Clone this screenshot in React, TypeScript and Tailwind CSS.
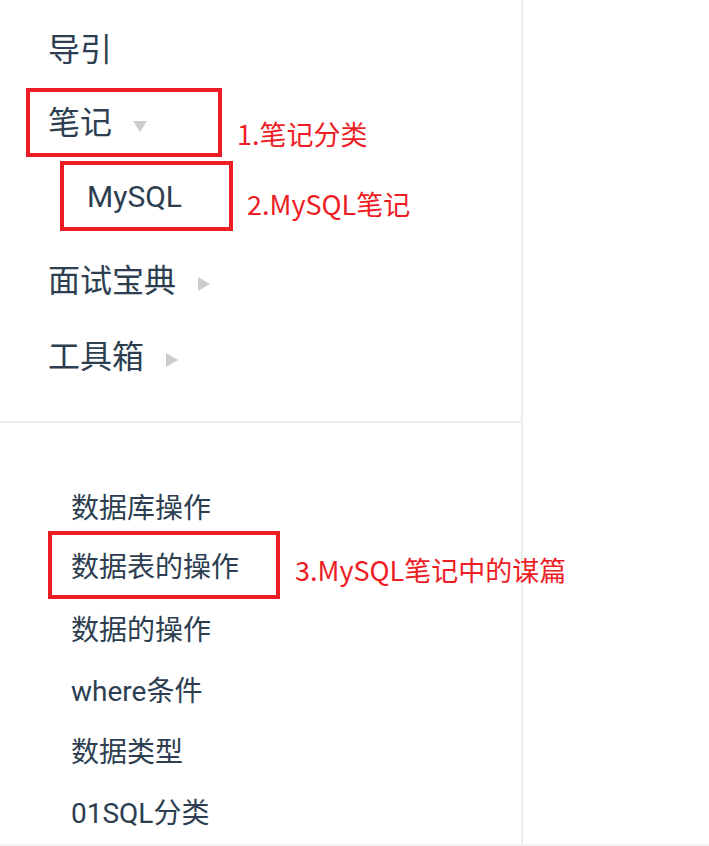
const text = "font-['Roboto','Noto_Sans_CJK_SC',sans-serif] text-[#2c3e50]";
const note =
  "whitespace-nowrap font-['Noto_Sans_CJK_SC',sans-serif] text-[27px] leading-none text-[#ee1c24]";
const box = "flex shrink-0 items-center border-[4px] border-[#ee1c24]";

function ArrowDown() {
  return (
    <span className="ml-[21px] mt-[7px] inline-block h-0 w-0 border-x-[7.5px] border-t-[11px] border-x-transparent border-t-[#ccc]" />
  );
}

function ArrowRight() {
  return (
    <span className="mt-[6px] inline-block h-0 w-0 border-y-[7.5px] border-l-[12px] border-y-transparent border-l-[#ccc]" />
  );
}

const links = ["数据库操作", "数据表的操作", "数据的操作", "where条件", "数据类型", "01SQL分类"];

export default function App() {
  return (
    <div className={`flex h-[846px] w-[709px] overflow-hidden border-b-[2px] border-[#f1f1f3] bg-white ${text}`}>
      <aside className="h-full w-[523px] shrink-0 border-r-[2px] border-[#eaecef]">
        {/* 导航 */}
        <nav className="border-b-[2px] border-[#eaecef] pt-[14px] pb-[28px]">
          <div className="flex h-[72px] items-center pl-[48px] text-[32px]">导引</div>

          <div className="flex h-[74px] items-start pl-[26px]">
            <div className={`${box} mt-[2px] h-[69px] w-[196px] pl-[18px] text-[32px]`}>
              笔记
              <ArrowDown />
            </div>
            <span className={`${note} ml-[15px] mt-[34px]`}>1.笔记分类</span>
          </div>

          <div className="flex h-[72px] items-start pl-[60px]">
            <div className={`${box} mt-[1px] h-[70px] w-[173px] pl-[23px] text-[30px]`}>MySQL</div>
            <span className={`${note} ml-[14px] mt-[30px]`}>2.MySQL笔记</span>
          </div>

          <div className="mt-[13px] flex h-[72px] items-center gap-[22px] pl-[48px] text-[32px]">
            面试宝典
            <ArrowRight />
          </div>

          <div className="mt-[4px] flex h-[72px] items-center gap-[22px] pl-[48px] text-[32px]">
            工具箱
            <ArrowRight />
          </div>
        </nav>

        {/* 侧边栏文章 */}
        <ul className="pt-[55px] text-[28px]">
          {links.map((l, i) =>
            i === 1 ? (
              <li key={l} className="flex h-[61px] items-start pl-[48px]">
                <div className={`${box} -mt-[8px] h-[68px] w-[232px] pl-[19px] pt-[6px]`}>{l}</div>
                <span className={`${note} ml-[15px] mt-[17px]`}>3.MySQL笔记中的谋篇</span>
              </li>
            ) : (
              <li key={l} className="flex h-[61px] items-center pl-[71px]">
                {l}
              </li>
            )
          )}
        </ul>
      </aside>
      <main className="flex-1" />
    </div>
  );
}
